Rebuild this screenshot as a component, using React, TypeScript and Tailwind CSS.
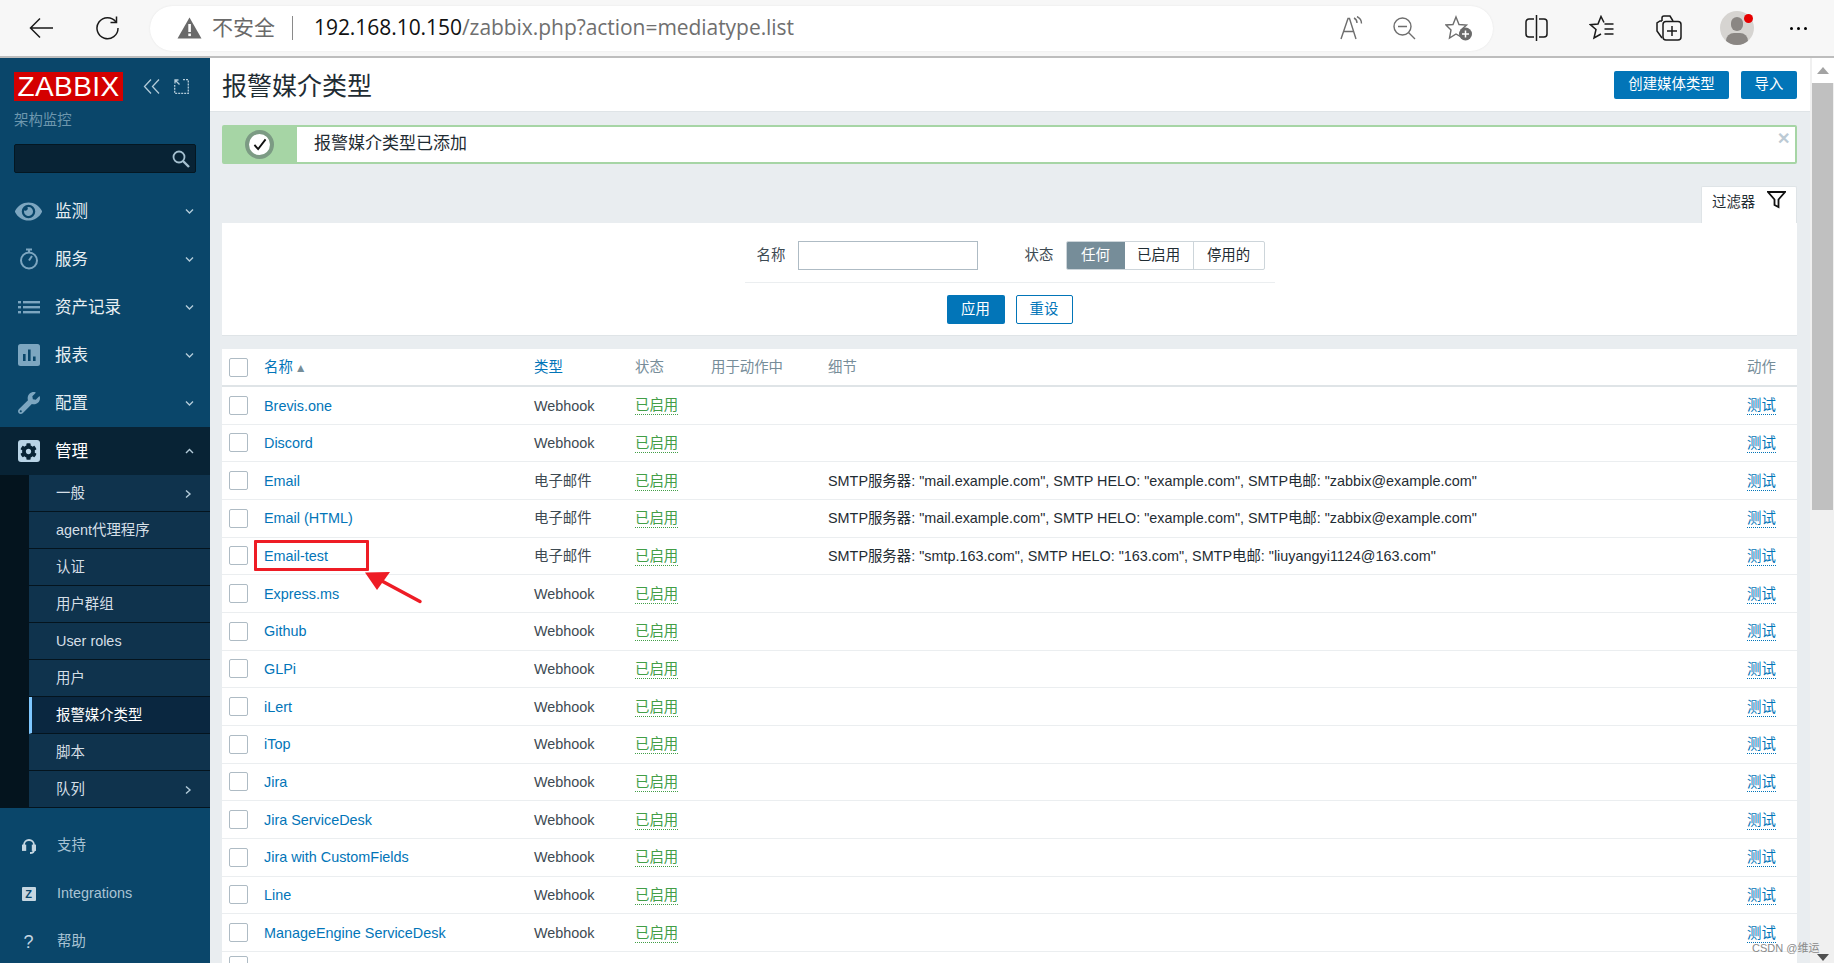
import React from "react";
import { FaEye, FaWrench, FaCog } from "react-icons/fa";

const CJK = "font-['Liberation_Sans','Noto_Sans_CJK_SC',sans-serif]";

const Chevron = ({ dir = "down" }: { dir?: "down" | "up" | "right" }) => {
  const d = dir === "down" ? "M1 1.5 L4.5 5 L8 1.5" : dir === "up" ? "M1 5 L4.5 1.5 L8 5" : "M2 0.5 L6 4 L2 7.5";
  return (
    <svg width="9" height="8" viewBox="0 0 9 8" fill="none" stroke="#b3cbd9" strokeWidth="1.4">
      <path d={d} />
    </svg>
  );
};

const IconC = "#7da6c0";
const StopIcon = () => (
  <svg width="20" height="22" viewBox="0 0 20 22" fill="none" stroke={IconC} strokeWidth="2">
    <circle cx="10" cy="12.5" r="8" />
    <path d="M7 1.5h6M10 2v2.5" />
    <path d="M10 12.5 L13 8" />
  </svg>
);
const ListIcon = () => (
  <svg width="22" height="14" viewBox="0 0 22 14" fill={IconC}>
    <rect x="0" y="1" width="3" height="2.4" />
    <rect x="5" y="1" width="17" height="2.4" />
    <rect x="0" y="6" width="3" height="2.4" />
    <rect x="5" y="6" width="17" height="2.4" />
    <rect x="0" y="11" width="3" height="2.4" />
    <rect x="5" y="11" width="17" height="2.4" />
  </svg>
);
const ChartIcon = () => (
  <svg width="22" height="22" viewBox="0 0 22 22">
    <rect width="22" height="22" rx="2.5" fill={IconC} />
    <rect x="5" y="10" width="2.6" height="7" fill="#0a466a" />
    <rect x="10" y="5.5" width="2.6" height="11.5" fill="#0a466a" />
    <rect x="15" y="12.5" width="2.6" height="4.5" fill="#0a466a" />
  </svg>
);
const GearBox = () => (
  <span className="flex h-[22px] w-[22px] items-center justify-center rounded-[3px] bg-[#b9d4e6]">
    <FaCog size={17} color="#082335" />
  </span>
);

const mainItems: { label: string; icon: React.ReactNode }[] = [
  { label: "监测", icon: <FaEye size={27} color={IconC} /> },
  { label: "服务", icon: <StopIcon /> },
  { label: "资产记录", icon: <ListIcon /> },
  { label: "报表", icon: <ChartIcon /> },
  { label: "配置", icon: <FaWrench size={22} color={IconC} /> },
];

const subItems = ["一般", "agent代理程序", "认证", "用户群组", "User roles", "用户", "报警媒介类型", "脚本", "队列"];

const rows: [string, string, string?][] = [
  ["Brevis.one", "Webhook"],
  ["Discord", "Webhook"],
  ["Email", "电子邮件", 'SMTP服务器: "mail.example.com", SMTP HELO: "example.com", SMTP电邮: "zabbix@example.com"'],
  ["Email (HTML)", "电子邮件", 'SMTP服务器: "mail.example.com", SMTP HELO: "example.com", SMTP电邮: "zabbix@example.com"'],
  ["Email-test", "电子邮件", 'SMTP服务器: "smtp.163.com", SMTP HELO: "163.com", SMTP电邮: "liuyangyi1124@163.com"'],
  ["Express.ms", "Webhook"],
  ["Github", "Webhook"],
  ["GLPi", "Webhook"],
  ["iLert", "Webhook"],
  ["iTop", "Webhook"],
  ["Jira", "Webhook"],
  ["Jira ServiceDesk", "Webhook"],
  ["Jira with CustomFields", "Webhook"],
  ["Line", "Webhook"],
  ["ManageEngine ServiceDesk", "Webhook"],
];

const Check = () => <span className="-mt-[2px] block h-[19px] w-[19px] rounded-[2px] border border-[#aebbc4] bg-white" />;

const gridCols = "grid grid-cols-[42px_270px_101px_76px_117px_919px_1fr] items-center";

function TopBar() {
  const s = { fill: "none", stroke: "#1a1a1a", strokeWidth: 1.5 };
  const g = { fill: "none", stroke: "#6e6e6e", strokeWidth: 1.4 };
  return (
    <div className="flex h-[58px] shrink-0 items-center border-b-2 border-[#bdbdbd] bg-[#f7f7f7]">
      <div className="flex w-[150px] shrink-0 items-center pl-[29px]">
        <svg width="25" height="22" viewBox="0 0 25 22" {...s}>
          <path d="M24 11H2M11 1.5L1.5 11L11 20.5" />
        </svg>
        <svg className="ml-[41px]" width="26" height="24" viewBox="0 0 26 24" {...s}>
          <path d="M21 6A10.5 10.5 0 1 0 23 12" />
          <path d="M21.5 0.5V6.5H15.5" />
        </svg>
      </div>
      <div className="flex h-[45px] w-[1343px] shrink-0 items-center rounded-[23px] bg-white pl-[27px] pr-[20px] shadow-[0_0_2px_#e4e4e4] font-['Open_Sans','Noto_Sans_CJK_SC',sans-serif] text-[21px]">
        <svg className="shrink-0" width="25" height="22" viewBox="0 0 25 22">
          <path d="M12.5 0.5L24.5 21.5H0.5Z" fill="#6a6a6a" />
          <rect x="11.3" y="7" width="2.6" height="8" fill="#fff" />
          <rect x="11.3" y="16.5" width="2.6" height="2.6" fill="#fff" />
        </svg>
        <span className="ml-[10px] w-[64px] shrink-0 whitespace-nowrap text-[#6a6a6a]">不安全</span>
        <span className="ml-[16px] h-[24px] w-px shrink-0 bg-[#8a8a8a]" />
        <span className="ml-[21px] whitespace-nowrap tracking-[-0.05px]">
          <span className="text-[#111]">192.168.10.150</span>
          <span className="text-[#6f6f6f]">/zabbix.php?action=mediatype.list</span>
        </span>
        <div className="ml-auto flex items-center gap-[29px]">
          <svg width="24" height="24" viewBox="0 0 24 24" {...g}>
            <path d="M1 23L8 2.5h1.5L16 23M4 15.5h10" />
            <path d="M14 2c2 1 3 3 3 5M17 0.5c3 1.500 4.500 4 4.500 7" />
          </svg>
          <svg width="23" height="23" viewBox="0 0 23 23" {...g}>
            <circle cx="9.5" cy="9.5" r="8.500" />
            <path d="M5 9.500h9M15.500 15.500L22 22" />
          </svg>
          <svg width="28" height="26" viewBox="0 0 28 26">
            <path d="M11 2L14 9.500L21.500 10L16 15L18 23L11 19L4.500 23L6 15L1 10L8 9.500Z" fill="none" stroke="#6e6e6e" strokeWidth="1.4" />
            <circle cx="20.500" cy="19" r="6.500" fill="#6a6a6a" />
            <path d="M20.500 15.500v7M17 19h7" stroke="#fff" strokeWidth="1.500" />
          </svg>
        </div>
      </div>
      <div className="ml-[32px] flex items-center">
        <svg width="23" height="26" viewBox="0 0 23 26" {...s}>
          <path d="M11.500 0v26M9 4H4a3 3 0 0 0-3 3v12a3 3 0 0 0 3 3h5M14 4h5a3 3 0 0 1 3 3v12a3 3 0 0 1-3 3h-5" />
        </svg>
        <svg className="ml-[41px]" width="25" height="26" viewBox="0 0 25 26" {...s}>
          <path d="M15 7.500L12 1.500L9 9L1.500 9.700L7 14.500L5 23L12 19" />
          <path d="M15.500 9h9M15.500 14h9M15.500 19h9" />
        </svg>
        <svg className="ml-[42px]" width="26" height="26" viewBox="0 0 26 26" {...s}>
          <path d="M6 6V3a2 2 0 0 1 2-2h6l3 5M6 6H4L1 8v8l5 7" />
          <rect x="7" y="6.500" width="18" height="18.500" rx="3" />
          <path d="M16 11v10M11 16h10" />
        </svg>
        <div className="relative ml-[38px] h-[34px] w-[34px] overflow-hidden rounded-full bg-[#d6d4d1]">
          <span className="absolute left-[11px] top-[6px] h-[14px] w-[12px] rounded-full bg-[#8a8683]" />
          <span className="absolute left-[6px] top-[22px] h-[16px] w-[22px] rounded-full bg-[#8a8683]" />
        </div>
        <span className="relative -ml-[10px] -mt-[20px] h-[9px] w-[9px] rounded-full bg-[#e60000]" />
        <div className="ml-[37px] flex gap-[4px]">
          <span className="h-[3px] w-[3px] rounded-full bg-black" />
          <span className="h-[3px] w-[3px] rounded-full bg-black" />
          <span className="h-[3px] w-[3px] rounded-full bg-black" />
        </div>
      </div>
    </div>
  );
}

function Sidebar() {
  return (
    <aside className="flex w-[210px] shrink-0 flex-col bg-[#0a466a]">
      <div className="flex h-[129px] shrink-0 flex-col px-[14px] pt-[14px]">
        <div className="flex items-center">
          <span className="flex h-[29px] w-[109px] items-center justify-center bg-[#d40000] font-['Liberation_Sans',sans-serif] text-[28px] leading-none tracking-[0.4px] text-white">ZABBIX</span>
          <svg className="ml-[20px]" width="18" height="15" viewBox="0 0 18 15" fill="none" stroke="#b3cbd9" strokeWidth="1.300">
            <path d="M8 0.500L1.500 7.500L8 14.500M16 0.500L9.500 7.500L16 14.500" />
          </svg>
          <svg className="ml-[13px]" width="15" height="15" viewBox="0 0 15 15" fill="none" stroke="#b3cbd9" strokeWidth="1.300">
            <path d="M9 0.700h5.300v13.600H0.700V6" strokeDasharray="2 1" />
            <path d="M1 1L5.500 5.500M1 4.500V1h3.500" />
          </svg>
        </div>
        <span className="mt-[11px] text-[14.4px] leading-[16px] text-[#6d97ae]">架构监控</span>
        <div className="mt-[16px] flex h-[29px] items-center justify-end rounded-[2px] border border-[#041722] bg-[#082335] pr-[5px]">
          <svg width="18" height="18" viewBox="0 0 18 18" fill="none" stroke="#a5c0d0" strokeWidth="1.800">
            <circle cx="7" cy="7" r="5.500" />
            <path d="M11 11L17 17" strokeWidth="2.400" />
          </svg>
        </div>
      </div>
      {mainItems.map((m) => (
        <div key={m.label} className="flex h-[48px] shrink-0 items-center">
          <span className="flex w-[55px] justify-center pl-[2px]">
            <span className="flex w-[28px] justify-center">{m.icon}</span>
          </span>
          <span className="text-[16.5px] text-[#e7eef2]">{m.label}</span>
          <span className="ml-auto mr-[16px] flex pt-[2px]"><Chevron /></span>
        </div>
      ))}
      <div className="flex h-[48px] shrink-0 items-center bg-[#082335]">
        <span className="flex w-[55px] justify-center pl-[2px]"><GearBox /></span>
        <span className="text-[16.5px] text-white">管理</span>
        <span className="ml-auto mr-[16px] flex pt-[2px]"><Chevron dir="up" /></span>
      </div>
      <div className="shrink-0 bg-[#04141e] pl-[29px]">
        {subItems.map((s) => {
          const active = s === "报警媒介类型";
          return (
            <div key={s} className={`flex h-[37px] items-center border-b border-[#04141e] pt-[2px] text-[14.4px] ${active ? "border-l-[3px] border-l-[#7fc8ff] bg-[#0a2740] pl-[24px] text-white" : "bg-[#0f334d] pl-[27px] text-[#d5dfe6]"}`}>
              <span>{s}</span>
              {(s === "一般" || s === "队列") && <span className="ml-auto mr-[17px] flex"><Chevron dir="right" /></span>}
            </div>
          );
        })}
      </div>
      <div className="flex flex-col pt-[14px] text-[14.4px] text-[#a9c3d4]">
        <div className="flex h-[48px] items-center">
          <span className="flex w-[57px] justify-center">
            <svg width="14" height="15" viewBox="0 0 14 15" fill="none" stroke="#c5d6e1" strokeWidth="1.800">
              <path d="M2 9V6a5 5 0 0 1 10 0v3" />
              <rect x="0.800" y="6.500" width="2.500" height="4.500" fill="#c5d6e1" />
              <rect x="10.700" y="6.500" width="2.500" height="4.500" fill="#c5d6e1" />
              <path d="M12 11c0 2-1.500 3-4 3" />
            </svg>
          </span>
          <span>支持</span>
        </div>
        <div className="flex h-[48px] items-center">
          <span className="flex w-[57px] justify-center">
            <span className="flex h-[14px] w-[14px] items-center justify-center rounded-[1px] bg-[#c5d6e1] text-[11px] font-bold leading-none text-[#0a466a]">Z</span>
          </span>
          <span>Integrations</span>
        </div>
        <div className="flex h-[48px] items-center">
          <span className="flex w-[57px] justify-center text-[18px] text-[#c5d6e1]">?</span>
          <span>帮助</span>
        </div>
      </div>
    </aside>
  );
}

function Main() {
  return (
    <main className="flex w-[1600px] shrink-0 flex-col overflow-hidden bg-[#e9edf0]">
      <div className="flex h-[54px] shrink-0 items-center justify-between border-b border-[#dfe4e7] bg-white pl-[12px] pr-[13px]">
        <h1 className="pt-[4px] text-[25px] font-normal text-[#1f2c33]">报警媒介类型</h1>
        <div className="flex gap-[12px] text-[14.4px] text-white">
          <button className="h-[28px] w-[115px] rounded-[2px] bg-[#0275b8]">创建媒体类型</button>
          <button className="h-[28px] w-[56px] rounded-[2px] bg-[#0275b8]">导入</button>
        </div>
      </div>

      <div className="ml-[12px] mr-[13px] mt-[13px] flex flex-col">
        <div className="relative flex h-[39px] shrink-0 rounded-[2px] border-2 border-[#a6d5a5] bg-white">
          <div className="flex w-[73px] shrink-0 items-center justify-center bg-[#a6d5a5] pr-[2px]">
            <span className="flex h-[29px] w-[29px] items-center justify-center rounded-full border-[4px] border-[#7c9b84] bg-white">
              <svg width="14" height="13" viewBox="0 0 15 14" fill="none" stroke="#111" strokeWidth="2">
                <path d="M1.500 7.500L5.500 12L13.500 1.500" />
              </svg>
            </span>
          </div>
          <span className="ml-[17px] self-center pb-[2px] text-[17px] text-[#1f2c33]">报警媒介类型已添加</span>
          <span className="absolute right-[5px] top-[4px] text-[16px] font-bold leading-[16px] text-[#bccad4]">✕</span>
        </div>

        <div className="mt-[22px] flex h-[37px] shrink-0 justify-end">
          <div className="flex w-[96px] items-start rounded-t-[2px] border-x border-t border-[#dfe4e7] bg-white pl-[10px] pt-[3px]">
            <span className="mt-[2px] text-[14.4px] text-[#1f2c33]">过滤器</span>
            <svg className="ml-[12px] mt-[1px]" width="19" height="18" viewBox="0 0 19 18" fill="none" stroke="#111" strokeWidth="1.800">
              <path d="M1 1H18L11.500 8.500V16L7.500 14V8.500Z" />
            </svg>
          </div>
        </div>

        <div className="relative flex h-[113px] shrink-0 flex-col items-center border-b border-[#dfe4e7] bg-white text-[14.4px] text-[#1f2c33]">
          <div className="mt-[18px] flex h-[29px] w-[530px] items-center pl-[12px]">
            <span className="w-[41px] text-[#3d4a52]">名称</span>
            <span className="h-[29px] w-[180px] border border-[#aebbc4] bg-white" />
            <span className="ml-[47px] w-[41px] text-[#3d4a52]">状态</span>
            <div className="flex h-[29px] overflow-hidden rounded-[2px] border border-[#cdd5da]">
              <span className="flex w-[58px] items-center justify-center bg-[#768d99] text-white">任何</span>
              <span className="flex w-[69px] items-center justify-center border-r border-[#cdd5da]">已启用</span>
              <span className="flex w-[70px] items-center justify-center">停用的</span>
            </div>
          </div>
          <div className="mt-[12px] h-px w-[530px] bg-[#ebeef0]" />
          <div className="mt-[12px] flex gap-[11px]">
            <button className="h-[29px] w-[58px] rounded-[2px] bg-[#0275b8] text-white">应用</button>
            <button className="h-[29px] w-[57px] rounded-[2px] border border-[#0275b8] bg-white text-[#0275b8]">重设</button>
          </div>
        </div>

        <div className="mt-[13px] shrink-0 bg-white text-[14.4px]">
          <div className={`${gridCols} h-[38px] border-b-2 border-[#dfe4e7] pt-[2px] text-[#768d99]`}>
            <span className="pl-[7px]"><Check /></span>
            <span className="text-[#0275b8]">名称 <span className="-ml-[2px] text-[12px] text-[#768d99]">▲</span></span>
            <span className="text-[#0275b8]">类型</span>
            <span>状态</span>
            <span className="whitespace-nowrap">用于动作中</span>
            <span>细节</span>
            <span>动作</span>
          </div>
          {rows.map(([name, type, detail]) => (
            <div key={name} className={`${gridCols} h-[37.67px] border-b border-[#ebeef0] pt-[2px]`}>
              <span className="pl-[7px]"><Check /></span>
              <span className="text-[#0275b8]">{name}</span>
              <span className="text-[#3d4a52]">{type}</span>
              <span className="justify-self-start border-b border-dotted border-[#429e47] leading-[17px] text-[#429e47]">已启用</span>
              <span />
              <span className="whitespace-nowrap text-[#1f2c33]">{detail}</span>
              <span className="justify-self-start border-b border-dotted border-[#0275b8] leading-[17px] text-[#0275b8]">测试</span>
            </div>
          ))}
          <div className="h-[37.67px] pl-[7px] pt-[6px]"><Check /></div>
        </div>
      </div>
    </main>
  );
}

export default function App() {
  return (
    <div className={`relative flex h-[963px] w-[1834px] flex-col overflow-hidden bg-white ${CJK}`}>
      <TopBar />
      <div className="flex min-h-0 flex-1">
        <Sidebar />
        <Main />
        <div className="flex w-[24px] shrink-0 flex-col items-center bg-[#f0f0f0] pl-[2px]">
          <div className="flex h-[25px] w-full shrink-0 items-center justify-center bg-white">
            <span className="h-0 w-0 border-x-[6px] border-b-[7px] border-x-transparent border-b-[#a3a3a3]" />
          </div>
          <div className="h-[427px] w-[21px] shrink-0 self-start bg-[#c0c0c0]" />
          <div className="mt-auto mb-[2px] h-0 w-0 border-x-[6px] border-t-[7px] border-x-transparent border-t-[#505050]" />
        </div>
      </div>

      {/* annotation over the table */}
      <div className="absolute left-[254px] top-[540px] h-[31px] w-[115px] rounded-[1px] border-[3px] border-[#ee1c25]" />
      <svg className="absolute left-[360px] top-[565px]" width="70" height="45" viewBox="0 0 70 45">
        <path d="M60 36.500L20 15" stroke="#ee1c25" strokeWidth="3.500" strokeLinecap="round" />
        <path d="M5 7.500L30 7L17 25Z" fill="#ee1c25" />
      </svg>
      <span className="absolute left-[1752px] top-[940px] whitespace-nowrap text-[11px] text-[#8a8a8a]">CSDN @维运</span>
    </div>
  );
}
